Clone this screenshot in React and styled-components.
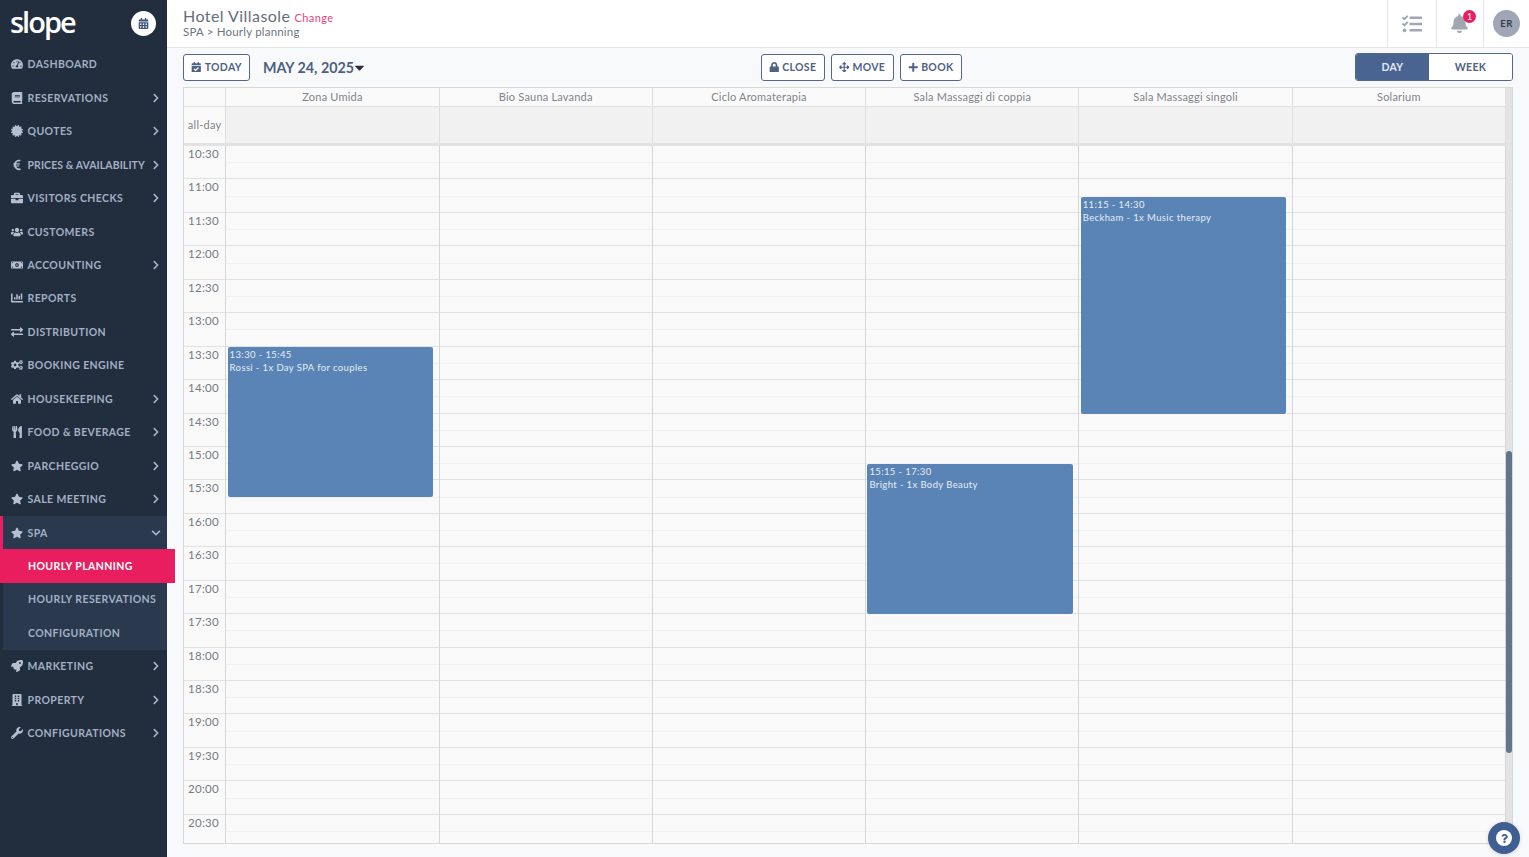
import React from 'react';
import styled, { createGlobalStyle } from 'styled-components';
import {
  FaTachometerAlt, FaBook, FaCertificate, FaEuroSign, FaBriefcase, FaUsers, FaMoneyBillAlt,
  FaChartBar, FaExchangeAlt, FaCogs, FaHome, FaUtensils, FaStar, FaRocket, FaBuilding, FaWrench,
  FaChevronRight, FaChevronDown, FaCalendarAlt, FaCalendarCheck, FaLock, FaArrowsAlt, FaPlus,
  FaCaretDown, FaBell, FaTasks, FaQuestion,
} from 'react-icons/fa';

const GlobalStyle = createGlobalStyle`
  html, body { margin: 0; padding: 0; height: 100%; }
  body { font-family: Lato, "Liberation Sans", sans-serif; background: #f8f9fa; overflow: hidden; }
  * { box-sizing: border-box; }
`;

const Page = styled.div`
  display: flex;
  width: 1529px;
  height: 857px;
`;

const Sidebar = styled.nav`
  width: 167px;
  flex-shrink: 0;
  background: #222d3e;
  position: relative;
  z-index: 2;
`;

const Brand = styled.div`
  height: 47.7px;
  display: flex;
  align-items: center;
  justify-content: space-between;
  padding: 0 11px 0 10px;
`;

const Logo = styled.span`
  color: #fff;
  font-family: "Open Sans", sans-serif;
  font-size: 29px;
  font-weight: 600;
  letter-spacing: -2px;
  line-height: 1;
  margin-top: -4px;
`;

const CalendarBadge = styled.span`
  width: 25px;
  height: 25px;
  border-radius: 50%;
  background: #fff;
  color: #3d5578;
  display: flex;
  align-items: center;
  justify-content: center;
  font-size: 11px;
`;

const NavRow = styled.div`
  height: 33.45px;
  display: flex;
  align-items: center;
  padding-left: 11px;
  padding-right: 6px;
  color: #a2afc4;
  font-size: 10.5px;
  font-weight: 700;
  letter-spacing: 0.4px;
  white-space: nowrap;
`;

const NavIcon = styled.span`
  width: 16.5px;
  flex-shrink: 0;
  display: flex;
  align-items: center;
  font-size: 12px;
  color: #b4bfd0;
`;

const NavLabel = styled.span`
  flex: 1;
  letter-spacing: ${(p) => (p.$tight ? '0.08px' : 'inherit')};
`;

const NavArrow = styled.span`
  display: flex;
  font-size: 10px;
  color: #a7b4c8;
`;

const NavGroup = styled.div`
  margin-left: 3px;
  background: #2a394e;
  position: relative;

  &::before {
    content: '';
    position: absolute;
    left: -3px;
    top: 0;
    width: 3px;
    height: 33.45px;
    background: #e91e63;
  }

  ${NavRow} { padding-left: 8px; }
`;

const SubItem = styled.div`
  height: 33.45px;
  display: flex;
  align-items: center;
  padding-left: 25px;
  color: #a2afc4;
  font-size: 10.5px;
  font-weight: 700;
  letter-spacing: 0.4px;
  white-space: nowrap;
`;

const ActiveSubItem = styled(SubItem)`
  background: #e91e5f;
  color: #fff;
  width: 175px;
  margin-left: -3px;
  padding-left: 28px;
  position: relative;
`;

const Main = styled.div`
  flex: 1;
  display: flex;
  flex-direction: column;
  min-width: 0;
`;

const Header = styled.header`
  height: 48px;
  background: #fff;
  border-bottom: 1px solid #e4e6ea;
  display: flex;
  align-items: stretch;
  justify-content: space-between;
  padding-left: 16px;
`;

const TitleBlock = styled.div`
  display: flex;
  flex-direction: column;
  justify-content: center;
  padding-bottom: 2px;
`;

const HotelLine = styled.div`
  display: flex;
  align-items: baseline;
  gap: 4px;
  line-height: 16px;
`;

const HotelName = styled.span`
  font-size: 16px;
  letter-spacing: 0.45px;
  color: #656d7b;
`;

const ChangeLink = styled.span`
  font-size: 11px;
  letter-spacing: 0.4px;
  color: #e8457f;
`;

const Crumb = styled.div`
  font-size: 11.5px;
  letter-spacing: 0.2px;
  line-height: 12px;
  color: #6d7582;
`;

const HeaderTools = styled.div`
  display: flex;
`;

const ToolCell = styled.div`
  width: ${(p) => p.$w}px;
  padding-right: ${(p) => p.$pr || 0}px;
  border-left: 1px solid #e6e7ea;
  display: flex;
  align-items: center;
  justify-content: center;
  position: relative;
  color: #a0a6b2;
`;

const BellBadge = styled.span`
  position: absolute;
  top: 10px;
  left: 26px;
  width: 13px;
  height: 13px;
  border-radius: 50%;
  background: #e91e5f;
  color: #fff;
  font-size: 9px;
  line-height: 13px;
  text-align: center;
`;

const Avatar = styled.span`
  width: 27px;
  height: 27px;
  border-radius: 50%;
  background: #a0a6b6;
  color: #333b48;
  font-size: 9.5px;
  font-weight: 700;
  letter-spacing: 0.4px;
  display: flex;
  align-items: center;
  justify-content: center;
`;

const Content = styled.div`
  flex: 1;
  padding: 5px 16px 13px;
  display: flex;
  flex-direction: column;
  min-height: 0;
`;

const Toolbar = styled.div`
  height: 34px;
  display: flex;
  align-items: flex-start;
  justify-content: space-between;
`;

const ToolGroup = styled.div`
  display: flex;
  align-items: center;
  gap: ${(p) => p.$gap || 6}px;
  margin-top: 1px;
`;

const OutlineButton = styled.button`
  height: 27px;
  width: ${(p) => p.$w}px;
  padding: 0 0 1px;
  border: 1px solid #53678a;
  border-radius: 3px;
  background: #fff;
  color: #4f6285;
  font-family: inherit;
  font-size: 10.5px;
  font-weight: 700;
  letter-spacing: 0.3px;
  display: flex;
  align-items: center;
  justify-content: center;
  gap: 3px;
  svg { font-size: 10.5px; }
`;

const DateLabel = styled.div`
  display: flex;
  align-items: center;
  color: #4d5f82;
  font-size: 14.3px;
  font-weight: 700;
  svg { color: #2a2f3a; font-size: 15px; margin-left: -2px; }
`;

const Segmented = styled.div`
  display: flex;
  height: 28px;
  margin-top: -1px;
  border: 1px solid #53678a;
  border-radius: 3px;
  overflow: hidden;
  background: #fff;
`;

const Segment = styled.div`
  width: ${(p) => p.$w}px;
  display: flex;
  align-items: center;
  justify-content: center;
  padding-bottom: 1px;
  font-size: 10.5px;
  font-weight: 700;
  letter-spacing: 0.3px;
  background: ${(p) => (p.$on ? '#4a6491' : '#fff')};
  color: ${(p) => (p.$on ? '#e4e9f1' : '#4f6285')};
`;

const Calendar = styled.div`
  flex: 1;
  min-height: 0;
  border: 1px solid #d8d8d8;
  background: #f9f9f9;
  display: flex;
  flex-direction: column;
  position: relative;
  overflow: hidden;
`;

const ColumnsRow = styled.div`
  display: grid;
  grid-template-columns: 42.3px repeat(6, 1fr) 6px;
  height: ${(p) => p.$h}px;
  flex-shrink: 0;
  background: ${(p) => p.$bg};
  border-bottom: ${(p) => p.$line};
`;

const HeadCell = styled.div`
  border-right: 1px solid #dedede;
  font-size: 11px;
  letter-spacing: 0.2px;
  color: #80848b;
  text-align: center;
  line-height: 18px;
`;

const AllDayCell = styled.div`
  border-right: 1px solid #dedede;
  font-size: 11px;
  letter-spacing: 0.25px;
  color: #80848b;
  padding-top: 11px;
  text-align: center;
  background: ${(p) => p.$bg || 'transparent'};
`;

const ScrollStub = styled.div`
  background: #e3e3e3;
`;

const TimeBody = styled.div`
  flex: 1;
  min-height: 0;
  display: grid;
  grid-template-columns: 42.3px repeat(6, 1fr) 6px;
  overflow: hidden;
`;

const AxisColumn = styled.div`
  border-right: 1px solid #d6d6d6;
`;

const AxisSlot = styled.div`
  height: 33.45px;
  border-bottom: 1px solid #e2e2e2;
  font-size: 11.5px;
  letter-spacing: 0.3px;
  color: #777b82;
  padding: 1px 0 0 4px;
  line-height: 14px;
`;

const DayColumn = styled.div`
  position: relative;
  border-right: 1px solid #d6d6d6;
`;

const Slot = styled.div`
  height: 33.45px;
  border-bottom: 1px solid #e2e2e2;
  position: relative;

  &::after {
    content: '';
    position: absolute;
    left: 0;
    right: 0;
    top: 16.2px;
    border-top: 1px solid #f0f0f0;
  }
`;

const EventCard = styled.div`
  position: absolute;
  left: 1.3px;
  right: 5.3px;
  background: #5a84b6;
  border-radius: 2px;
  color: #e6edf5;
  font-size: 9.5px;
  letter-spacing: 0.38px;
  line-height: 13px;
  padding: 1px 2px;
  z-index: 1;
`;

const ScrollTrack = styled.div`
  background: #e3e3e3;
  position: relative;
`;

const ScrollThumb = styled.div`
  position: absolute;
  left: 0;
  right: 0;
  top: 305px;
  height: 302px;
  border-radius: 4px;
  background: #64748c;
`;

const HelpButton = styled.button`
  position: fixed;
  left: 1488px;
  top: 822px;
  width: 32px;
  height: 32px;
  border-radius: 50%;
  border: none;
  padding: 0;
  background: #3f5f92;
  display: flex;
  align-items: center;
  justify-content: center;
  z-index: 3;
  box-shadow: 0 1px 4px rgba(0, 0, 0, 0.15);
`;

const HelpInner = styled.span`
  width: 16px;
  height: 16px;
  border-radius: 50%;
  background: #fff;
  color: #3f5f92;
  display: flex;
  align-items: center;
  justify-content: center;
  font-size: 9px;
`;

const NAV_TOP = [
  { label: 'DASHBOARD', icon: FaTachometerAlt },
  { label: 'RESERVATIONS', icon: FaBook, arrow: true },
  { label: 'QUOTES', icon: FaCertificate, arrow: true },
  { label: 'PRICES & AVAILABILITY', icon: FaEuroSign, arrow: true, tight: true },
  { label: 'VISITORS CHECKS', icon: FaBriefcase, arrow: true },
  { label: 'CUSTOMERS', icon: FaUsers },
  { label: 'ACCOUNTING', icon: FaMoneyBillAlt, arrow: true },
  { label: 'REPORTS', icon: FaChartBar },
  { label: 'DISTRIBUTION', icon: FaExchangeAlt },
  { label: 'BOOKING ENGINE', icon: FaCogs },
  { label: 'HOUSEKEEPING', icon: FaHome, arrow: true },
  { label: 'FOOD & BEVERAGE', icon: FaUtensils, arrow: true },
  { label: 'PARCHEGGIO', icon: FaStar, arrow: true },
  { label: 'SALE MEETING', icon: FaStar, arrow: true },
];

const NAV_BOTTOM = [
  { label: 'MARKETING', icon: FaRocket, arrow: true },
  { label: 'PROPERTY', icon: FaBuilding, arrow: true },
  { label: 'CONFIGURATIONS', icon: FaWrench, arrow: true },
];

const RESOURCES = [
  'Zona Umida',
  'Bio Sauna Lavanda',
  'Ciclo Aromaterapia',
  'Sala Massaggi di coppia',
  'Sala Massaggi singoli',
  'Solarium',
];

const EVENTS = {
  0: { from: 13.5, to: 15.75, time: '13:30 - 15:45', title: 'Rossi - 1x Day SPA for couples' },
  3: { from: 15.25, to: 17.5, time: '15:15 - 17:30', title: 'Bright - 1x Body Beauty' },
  4: { from: 11.25, to: 14.5, time: '11:15 - 14:30', title: 'Beckham - 1x Music therapy' },
};

const SLOT_H = 33.45;
const FIRST_HOUR = 10.5;
const times = Array.from({ length: 21 }, (_, i) => {
  const mins = 630 + i * 30;
  return `${Math.floor(mins / 60)}:${mins % 60 === 0 ? '00' : '30'}`;
});

const NavItem = ({ item }) => {
  const Icon = item.icon;
  return (
    <NavRow>
      <NavIcon><Icon /></NavIcon>
      <NavLabel $tight={item.tight}>{item.label}</NavLabel>
      {item.arrow && <NavArrow><FaChevronRight /></NavArrow>}
    </NavRow>
  );
};

const App = () => (
  <Page>
    <GlobalStyle />
    <Sidebar>
      <Brand>
        <Logo>slope</Logo>
        <CalendarBadge><FaCalendarAlt /></CalendarBadge>
      </Brand>
      {NAV_TOP.map((item) => <NavItem key={item.label} item={item} />)}
      <NavGroup>
        <NavRow>
          <NavIcon><FaStar /></NavIcon>
          <NavLabel>SPA</NavLabel>
          <NavArrow><FaChevronDown /></NavArrow>
        </NavRow>
        <ActiveSubItem>HOURLY PLANNING</ActiveSubItem>
        <SubItem>HOURLY RESERVATIONS</SubItem>
        <SubItem>CONFIGURATION</SubItem>
      </NavGroup>
      {NAV_BOTTOM.map((item) => <NavItem key={item.label} item={item} />)}
    </Sidebar>
    <Main>
      <Header>
        <TitleBlock>
          <HotelLine>
            <HotelName>Hotel Villasole</HotelName>
            <ChangeLink>Change</ChangeLink>
          </HotelLine>
          <Crumb>SPA &gt; Hourly planning</Crumb>
        </TitleBlock>
        <HeaderTools>
          <ToolCell $w={49}>
            <FaTasks size={20} />
          </ToolCell>
          <ToolCell $w={47} $pr={2}>
            <FaBell size={19} />
            <BellBadge>1</BellBadge>
          </ToolCell>
          <ToolCell $w={46}>
            <Avatar>ER</Avatar>
          </ToolCell>
        </HeaderTools>
      </Header>
      <Content>
        <Toolbar>
          <ToolGroup $gap={13}>
            <OutlineButton $w={67}><FaCalendarCheck />TODAY</OutlineButton>
            <DateLabel>MAY 24, 2025<FaCaretDown /></DateLabel>
          </ToolGroup>
          <ToolGroup>
            <OutlineButton $w={64}><FaLock />CLOSE</OutlineButton>
            <OutlineButton $w={63}><FaArrowsAlt />MOVE</OutlineButton>
            <OutlineButton $w={62}><FaPlus />BOOK</OutlineButton>
          </ToolGroup>
          <ToolGroup>
            <Segmented>
              <Segment $w={73} $on>DAY</Segment>
              <Segment $w={83}>WEEK</Segment>
            </Segmented>
          </ToolGroup>
        </Toolbar>
        <Calendar>
          <ColumnsRow $h={19} $bg="#fafafa" $line="1px solid #e0e0e0">
            <HeadCell />
            {RESOURCES.map((name) => <HeadCell key={name}>{name}</HeadCell>)}
            <ScrollStub />
          </ColumnsRow>
          <ColumnsRow $h={39} $bg="#f1f1f1" $line="3px solid #e2e2e2">
            <AllDayCell $bg="#f9f9f9">all-day</AllDayCell>
            {RESOURCES.map((name) => <AllDayCell key={name} />)}
            <ScrollStub />
          </ColumnsRow>
          <TimeBody>
            <AxisColumn>
              {times.map((t) => <AxisSlot key={t}>{t}</AxisSlot>)}
            </AxisColumn>
            {RESOURCES.map((name, col) => {
              const ev = EVENTS[col];
              return (
                <DayColumn key={name}>
                  {times.map((t) => <Slot key={t} />)}
                  {ev && (
                    <EventCard
                      style={{
                        top: (ev.from - FIRST_HOUR) * 2 * SLOT_H + 0.5,
                        height: (ev.to - ev.from) * 2 * SLOT_H - 0.5,
                      }}
                    >
                      <div>{ev.time}</div>
                      <div>{ev.title}</div>
                    </EventCard>
                  )}
                </DayColumn>
              );
            })}
            <ScrollTrack><ScrollThumb /></ScrollTrack>
          </TimeBody>
        </Calendar>
      </Content>
    </Main>
    <HelpButton aria-label="Help">
      <HelpInner><FaQuestion /></HelpInner>
    </HelpButton>
  </Page>
);

export default App;
